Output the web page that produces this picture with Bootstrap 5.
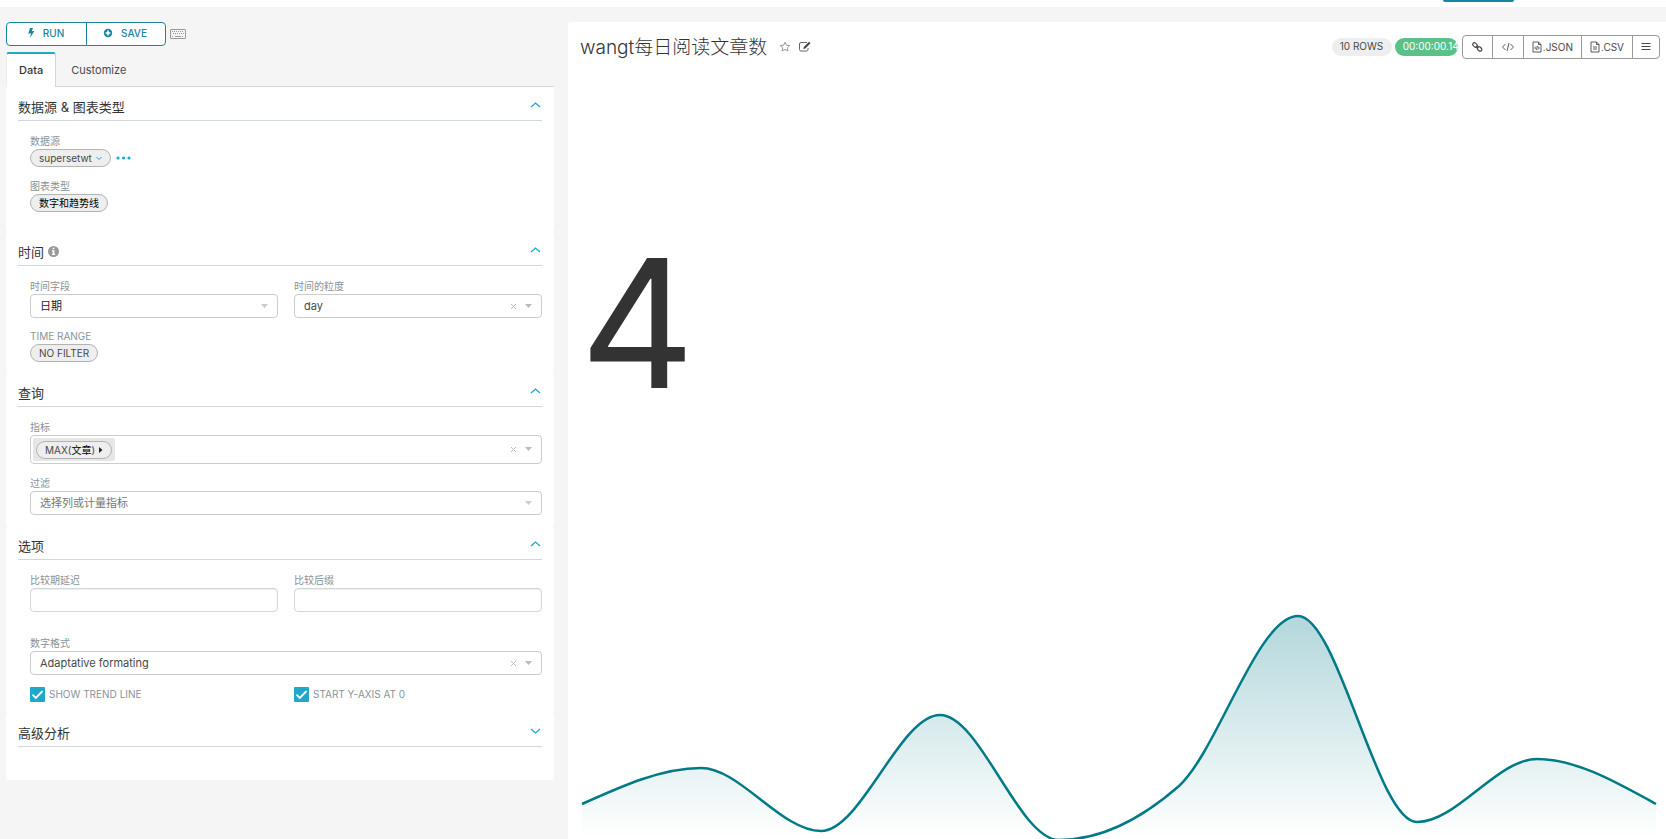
<!DOCTYPE html>
<html lang="zh-CN">
<head>
<meta charset="utf-8">
<meta name="viewport" content="width=device-width, initial-scale=1">
<title>wangt每日阅读文章数</title>
<link href="https://cdn.jsdelivr.net/npm/bootstrap@5.3.0/dist/css/bootstrap.min.css" rel="stylesheet">
<style>
  :root { --teal: #1985a0; --cyan: #20a7c9; --line: #cfd8dc; --edge: #ccc; --ink: #484848; }
  body { font-family: Inter, "Noto Sans CJK SC", sans-serif; font-size: 12px; line-height: 16px; color: var(--ink); background: #f5f5f5; }
  .page { height: 100vh; overflow: hidden; }
  .topbar { flex: 0 0 7px; padding-right: 152px; }
  .topbar-btn { width: 71px; height: 2px; background: var(--teal); border-radius: 0 0 3px 3px; border: 0; padding: 0; }
  .explore { display: grid; grid-template-columns: 274fr 549fr; gap: 14px; padding: 15px 0 0 6px; min-height: 0; }

  .btn-run { --bs-btn-color: var(--teal); --bs-btn-bg: #fff; --bs-btn-border-color: var(--teal); width: 80px; height: 24px; padding: 0 2px 2px 0; font-size: 10px; line-height: 16px; font-weight: 500; --bs-btn-border-radius: 4px; border-radius: 4px; }
  .btn-group .btn-run:not(:last-child) { width: 81px; }
  .panel-tabs { --bs-nav-tabs-border-color: var(--line); --bs-nav-tabs-border-radius: 0; margin-top: 6px; height: 35px; }
  .panel-tabs .nav-link { font-size: 11px; line-height: 16px; padding: 10px 15px 8px; color: var(--ink); border: 0; margin: 0; height: 34px; }
  .panel-tabs .nav-link.active { color: #333; background: #fff; height: 35px; padding: 8px 12px; border-top: 2px solid var(--cyan); border-right: 1px solid var(--line); border-left: 1px solid #e9eef0; border-radius: 3px 3px 0 0; font-weight: 500; }

  .sect { background: #fff; padding: 0 12px 11px; border-radius: 0 0 3px 3px; }
  .sect + .sect { border-radius: 3px; }
  .sect-head { height: 34px; padding-top: 6px; font-size: 13px; line-height: 16px; border-bottom: 1px solid var(--line); color: #333; margin: 0; font-weight: 400; }
  .sect-body { padding: 12px 0 0 12px; display: grid; gap: 11px 16px; grid-template-columns: 1fr 1fr; }
  .sect-time .sect-body { row-gap: 10px; }
  .wide { grid-column: 1 / -1; }
  .sect-type { padding-bottom: 20px; }
  .sect-last { padding-bottom: 33px; }
  .gap-over { margin-top: 12px; }
  .chev { width: 11px; height: 11px; fill: none; stroke: var(--cyan); stroke-width: 1.3; }
  .btn-bare { border: 0; background: none; padding: 0; display: flex; align-items: center; }
  .sect-head .btn-bare { padding: 0 1px 2px 0; }
  .fld { display: block; font-size: 10px; line-height: 16px; height: 16px; color: #879399; }
  .pill { display: inline-flex; align-items: center; height: 18px; border: 1px solid #b3b3b3; border-radius: 9px; background: #eee; padding: 0 8px; font-size: 10px; line-height: 16px; color: var(--ink); white-space: nowrap; }
  .box { position: relative; }
  .box select, .box input, .box-multi { appearance: none; display: block; width: 100%; height: 24px; border: 1px solid var(--edge); border-radius: 4px; background: #fff; font-size: 11px; line-height: 16px; padding: 0 9px; color: var(--ink); }
  .box select.strong { color: #222; }
  .box select.hint { color: #777; }
  .box input { border-color: var(--line); box-shadow: inset 0 1px 1px rgba(0,0,0,.07); }
  .box-multi { height: 29px; padding: 2px; }
  .tag { background: #e6e6e6; border-radius: 2px; padding: 3px; height: 23px; display: inline-flex; }
  .marks { position: absolute; right: 9px; top: 0; bottom: 0; display: flex; align-items: center; gap: 7px; pointer-events: none; }
  .tick { appearance: none; width: 15px; height: 15px; margin: 0; border-radius: 1px; background: var(--cyan) url("data:image/svg+xml,%3Csvg xmlns='http://www.w3.org/2000/svg' viewBox='0 0 15 15'%3E%3Cpath d='M2.5 7.7l3.3 3.3 6.7-6.8' fill='none' stroke='%23fff' stroke-width='1.8'/%3E%3C/svg%3E"); }

  .chart-panel { background: #fff; border-radius: 3px 0 0 0; padding: 13px 10px 0 14px; min-height: 0; }
  .chart-head { margin-right: -4px; height: 24px; }
  .chart-title { font-size: 19px; line-height: 24px; font-weight: 300; color: #333; margin: 0 4px 0 -2px; padding-top: 2px; }
  .count { height: 18px; border-radius: 9px; font-size: 10px; line-height: 17px; white-space: nowrap; }
  .count-rows { background: #eee; padding: 0 8px; width: 60px; }
  .count-time { background: #5ac189; color: #fff; width: 63px; padding-left: 8px; margin: 0 4px 0 3px; }
  .btn-tool { --bs-btn-color: var(--ink); --bs-btn-bg: #fff; --bs-btn-border-color: #999; height: 24px; padding: 0 8px 1px; font-size: 10px; line-height: 16px; display: flex; align-items: center; gap: 1px; border-radius: 4px; }
  .big { font-size: 178px; line-height: 180px; color: #333; margin: 175px 0 0 -2px; }
  .trend { display: block; width: 100%; height: 239px; overflow: visible; margin-top: auto; flex: none; }
</style>
</head>
<body>
<div class="page d-flex flex-column">
  <header class="topbar bg-white d-flex justify-content-end align-items-start">
    <button class="topbar-btn" type="button" aria-label="New"></button>
  </header>
  <main class="explore flex-grow-1">
    <aside>
      <div class="d-flex align-items-center">
        <div class="btn-group">
          <button class="btn btn-run d-flex align-items-center justify-content-center" type="button">
            <svg class="me-2" width="8" height="10" viewBox="0 0 8 10"><path d="M3 0h3L4.800 3.200 7.500 2.700 3 10 4 5.200 1.200 5.800z" fill="currentColor"/></svg>RUN</button>
          <button class="btn btn-run d-flex align-items-center justify-content-center" type="button">
            <svg class="me-2" width="10" height="10" viewBox="0 0 10 10"><path d="M5 .8a4.200 4.200 0 1 0 0 8.400A4.200 4.200 0 0 0 5 .8zM4.200 2.600h1.600v1.600h1.600v1.600H5.800v1.600H4.200V5.800H2.600V4.200h1.600z" fill="currentColor" fill-rule="evenodd"/></svg>SAVE</button>
        </div>
        <svg class="ms-1" width="16" height="10" viewBox="0 0 16 10" fill="none" stroke="#999"><rect x=".5" y=".5" width="15" height="9" rx=".5"/><path d="M2 2.500h12M3 4.500h11M2 7.500h2m8 0h2" stroke-dasharray="1 1"/><path d="M5 7.500h6"/></svg>
      </div>
      <ul class="nav nav-tabs panel-tabs">
        <li class="nav-item"><a class="nav-link active" href="#data">Data</a></li>
        <li class="nav-item"><a class="nav-link" href="#customize">Customize</a></li>
      </ul>

      <section class="sect sect-type">
        <h2 class="sect-head d-flex align-items-center justify-content-between"><span>数据源 &amp; 图表类型</span>
          <button class="btn-bare" type="button" aria-label="Collapse"><svg class="chev" viewBox="0 0 11 11"><path d="M1 7l4.500-4L10 7"/></svg></button></h2>
        <div class="sect-body">
          <div class="wide">
            <span class="fld">数据源</span>
            <div class="d-flex align-items-center">
              <button class="pill" type="button">supersetwt <svg class="ms-1" width="6" height="5" viewBox="0 0 6 5" fill="none" stroke="#20a7c9"><path d="M.5 1L3 3.500 5.500 1"/></svg></button>
              <button class="btn-bare ms-1" type="button" aria-label="More"><svg width="16" height="4" viewBox="0 0 16 4" fill="#20a7c9"><circle cx="3" cy="2" r="1.600"/><circle cx="8.500" cy="2" r="1.600"/><circle cx="14" cy="2" r="1.600"/></svg></button>
            </div>
          </div>
          <div class="wide"><span class="fld">图表类型</span>
            <button class="pill d-flex text-black" type="button">数字和趋势线</button></div>
        </div>
      </section>

      <section class="sect sect-time">
        <h2 class="sect-head d-flex align-items-center justify-content-between"><span class="d-flex align-items-center">时间
            <svg class="ms-1" width="11" height="11" viewBox="0 0 11 11"><circle cx="5.500" cy="5.500" r="5.500" fill="#999"/><path d="M4.700 1.800h1.700v1.500H4.700zM3.900 4.300h2.500v3.500h.8v1.200H3.900V7.800h.8V5.500h-.8z" fill="#fff"/></svg></span>
          <button class="btn-bare" type="button" aria-label="Collapse"><svg class="chev" viewBox="0 0 11 11"><path d="M1 7l4.500-4L10 7"/></svg></button></h2>
        <div class="sect-body">
          <div><label class="fld" for="col">时间字段</label>
            <div class="box"><select id="col" class="strong"><option>日期</option></select>
              <span class="marks"><svg width="9" height="5" viewBox="0 0 9 5"><path d="M1 0h7L4.500 4z" fill="#ccc"/></svg></span></div></div>
          <div><label class="fld" for="grain">时间的粒度</label>
            <div class="box"><select id="grain"><option>day</option></select>
              <span class="marks"><svg width="7" height="7" viewBox="0 0 7 7"><path d="M1 1l5 5M6 1L1 6" stroke="#bbb"/></svg><svg width="9" height="5" viewBox="0 0 9 5"><path d="M1 0h7L4.500 4z" fill="#bbb"/></svg></span></div></div>
          <div class="wide"><span class="fld">TIME RANGE</span>
            <button class="pill d-flex" type="button">NO FILTER</button></div>
        </div>
      </section>

      <section class="sect">
        <h2 class="sect-head d-flex align-items-center justify-content-between"><span>查询</span>
          <button class="btn-bare" type="button" aria-label="Collapse"><svg class="chev" viewBox="0 0 11 11"><path d="M1 7l4.500-4L10 7"/></svg></button></h2>
        <div class="sect-body">
          <div class="wide"><span class="fld">指标</span>
            <div class="box"><div class="box-multi"><span class="tag"><button class="pill" type="button">MAX<span>(<span class="text-black">文章</span>)</span><svg class="ms-1" width="4" height="6" viewBox="0 0 4 6"><path d="M0 0l3.500 3L0 6z" fill="#222"/></svg></button></span></div>
              <span class="marks"><svg width="7" height="7" viewBox="0 0 7 7"><path d="M1 1l5 5M6 1L1 6" stroke="#bbb"/></svg><svg width="9" height="5" viewBox="0 0 9 5"><path d="M1 0h7L4.500 4z" fill="#bbb"/></svg></span></div></div>
          <div class="wide"><label class="fld" for="filters">过滤</label>
            <div class="box"><select id="filters" class="hint"><option>选择列或计量指标</option></select>
              <span class="marks"><svg width="9" height="5" viewBox="0 0 9 5"><path d="M1 0h7L4.500 4z" fill="#ccc"/></svg></span></div></div>
        </div>
      </section>

      <section class="sect">
        <h2 class="sect-head d-flex align-items-center justify-content-between"><span>选项</span>
          <button class="btn-bare" type="button" aria-label="Collapse"><svg class="chev" viewBox="0 0 11 11"><path d="M1 7l4.500-4L10 7"/></svg></button></h2>
        <div class="sect-body">
          <div><label class="fld" for="lag">比较期延迟</label><div class="box"><input id="lag" type="text"></div></div>
          <div><label class="fld" for="suffix">比较后缀</label><div class="box"><input id="suffix" type="text"></div></div>
          <div class="wide gap-over"><label class="fld" for="fmt">数字格式</label>
            <div class="box"><select id="fmt"><option>Adaptative formating</option></select>
              <span class="marks"><svg width="7" height="7" viewBox="0 0 7 7"><path d="M1 1l5 5M6 1L1 6" stroke="#bbb"/></svg><svg width="9" height="5" viewBox="0 0 9 5"><path d="M1 0h7L4.500 4z" fill="#bbb"/></svg></span></div></div>
          <div class="d-flex align-items-end gap-1"><input class="tick" id="trend" type="checkbox" checked><label class="fld" for="trend">SHOW TREND LINE</label></div>
          <div class="d-flex align-items-end gap-1"><input class="tick" id="zero" type="checkbox" checked><label class="fld" for="zero">START Y-AXIS AT 0</label></div>
        </div>
      </section>

      <section class="sect sect-last">
        <h2 class="sect-head d-flex align-items-center justify-content-between"><span>高级分析</span>
          <button class="btn-bare" type="button" aria-label="Expand"><svg class="chev" viewBox="0 0 11 11"><path d="M1 3l4.500 4L10 3"/></svg></button></h2>
      </section>
    </aside>

    <section class="chart-panel d-flex flex-column">
      <div class="chart-head d-flex align-items-center">
        <h1 class="chart-title">wangt每日阅读文章数</h1>
        <button class="btn-bare ms-2" type="button" aria-label="Favorite"><svg width="12" height="12" viewBox="0 0 12 12" fill="none" stroke="#999"><path d="M6 1.200l1.400 3 3.300.4-2.400 2.200.6 3.200L6 8.400 3.100 10l.6-3.200L1.300 4.600l3.300-.4z"/></svg></button>
        <button class="btn-bare ms-2" type="button" aria-label="Edit"><svg width="12" height="12" viewBox="0 0 12 12"><path d="M8 1.500H2A1.500 1.500 0 0 0 .5 3v5.500A1.500 1.500 0 0 0 2 10h5.500A1.500 1.500 0 0 0 9 8.500V7" fill="none" stroke="#666"/><path d="M10 .8l1.500 1.500L6.300 7.600l-2 .5.5-2z" fill="#444"/></svg></button>
        <span class="count count-rows ms-auto">10 ROWS</span>
        <span class="count count-time">00:00:00.14</span>
        <div class="btn-group">
          <button class="btn btn-tool" type="button" aria-label="Link"><svg width="13" height="12" viewBox="0 0 13 12" fill="none" stroke="currentColor" stroke-width="1.200"><rect x="1.500" y="2.300" width="5" height="3.400" rx="1.600" transform="rotate(42 4 4)"/><rect x="6" y="6.200" width="5" height="3.400" rx="1.600" transform="rotate(42 8.500 8)"/><path d="M5 5l2.500 2.300"/></svg></button>
          <button class="btn btn-tool" type="button" aria-label="Embed"><svg width="14" height="10" viewBox="0 0 14 10" fill="none" stroke="currentColor" stroke-width=".9"><path d="M4.500 2L1.500 5l3 3M9.500 2l3 3-3 3M8 1L6 9"/></svg></button>
          <button class="btn btn-tool" type="button"><svg width="10" height="12" viewBox="0 0 10 12" fill="none" stroke="currentColor" stroke-width=".9"><path d="M1 1h5.500L9 3.500V11H1zM6.500 1v2.500H9M4 5.500L2.700 7 4 8.500M6 5.500L7.300 7 6 8.500M5.400 5l-.8 4"/></svg>.JSON</button>
          <button class="btn btn-tool" type="button"><svg width="10" height="12" viewBox="0 0 10 12" fill="none" stroke="currentColor" stroke-width=".9"><path d="M1 1h5.500L9 3.500V11H1zM6.500 1v2.500H9M3 6h4M3 8h4"/></svg>.CSV</button>
          <button class="btn btn-tool" type="button" aria-label="Menu"><svg width="10" height="9" viewBox="0 0 10 9" stroke="currentColor"><path d="M.5 1.500h9M.5 4.500h9M.5 7.500h9"/></svg></button>
        </div>
      </div>
      <div class="big">4</div>
      <svg class="trend" viewBox="0 0 1074 239" preserveAspectRatio="none" role="img" aria-label="Trend line">
        <defs><linearGradient id="fade" gradientUnits="userSpaceOnUse" x1="0" y1="16" x2="0" y2="239"><stop offset="0" stop-color="#007a87" stop-opacity=".3"/><stop offset="1" stop-color="#007a87" stop-opacity="0"/></linearGradient></defs>
        <path fill="url(#fade)" d="M0 204C40 186 80 168 119 168S199 231 239 231 318 115 358 115 437 240 477 240 557 221 597 186C636 150 676 16 716 16S795 222 835 222 915 159 955 159C994 159 1034 182 1074 204V239H0z"/>
        <path fill="none" stroke="#007a87" stroke-width="2.500" vector-effect="non-scaling-stroke" d="M0 204C40 186 80 168 119 168S199 231 239 231 318 115 358 115 437 240 477 240 557 221 597 186C636 150 676 16 716 16S795 222 835 222 915 159 955 159C994 159 1034 182 1074 204"/>
      </svg>
    </section>
  </main>
</div>
<script src="https://cdn.jsdelivr.net/npm/bootstrap@5.3.0/dist/js/bootstrap.bundle.min.js"></script>
</body>
</html>
